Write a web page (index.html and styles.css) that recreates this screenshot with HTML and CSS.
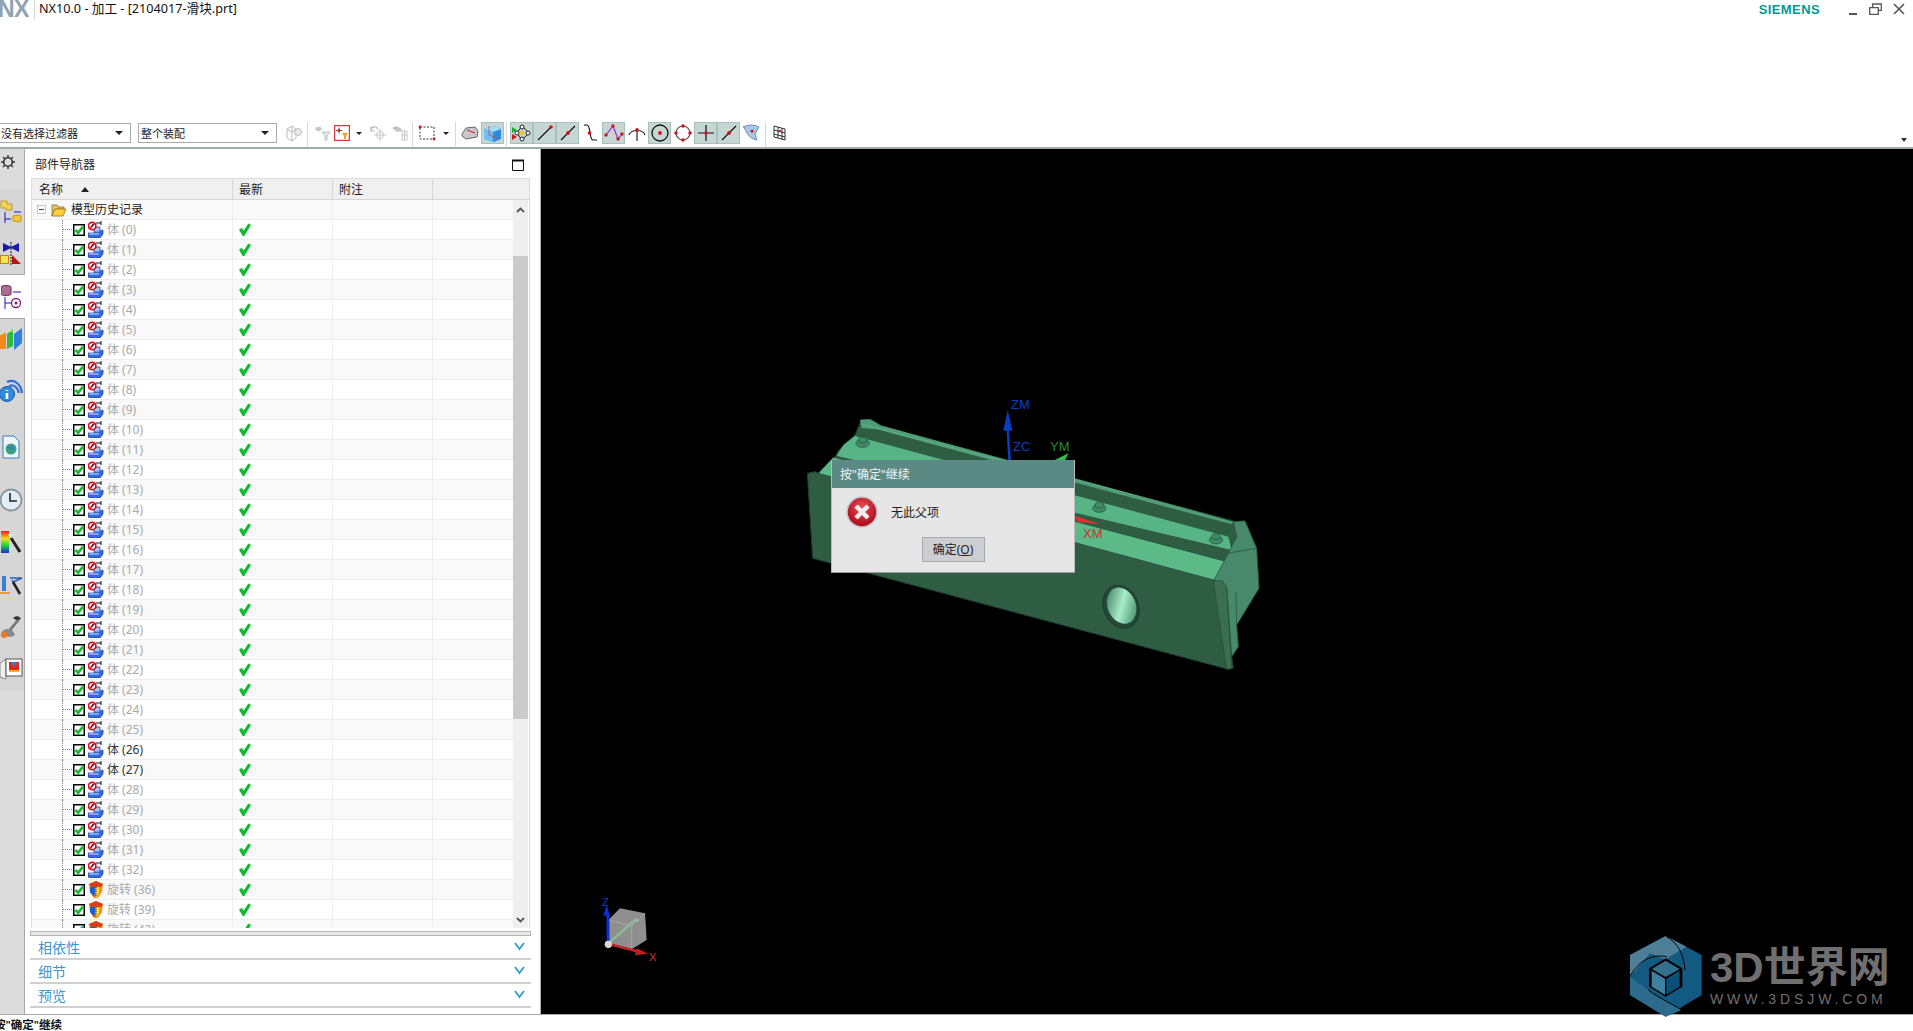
FILE: index.html
```html
<!DOCTYPE html>
<html lang="zh">
<head>
<meta charset="utf-8">
<title>NX10.0 - 加工 - [2104017-滑块.prt]</title>
<link rel="stylesheet" href="styles.css">
</head>
<body>
<svg class="defs" width="0" height="0">
  <symbol id="i-box" viewBox="0 0 12 12"><rect x=".75" y=".75" width="10.5" height="10.5" fill="#fff" stroke="#000" stroke-width="1.5"/><path d="M2.5 6l2.6 2.8L10 2.6" fill="none" stroke="#0fbe2c" stroke-width="2.6"/></symbol>
  <symbol id="i-body" viewBox="0 0 16 17"><path d="M8 2h5M13 0v4" stroke="#111" fill="none"/><path d="M6 6h6v4l3-1v4l-3 4H3l-3-1v-4h6z" fill="#3568d8" stroke="#1c3f9e" stroke-width=".7"/><path d="M6.500 6.500h5v4h-5z" fill="#a8c4ef"/><path d="M1 12h10v2H1z" fill="#7fa6ea"/><circle cx="4.200" cy="5" r="3.700" fill="#fff" stroke="#d3121e" stroke-width="1.700"/><path d="M1.800 7.500l5-5" stroke="#d3121e" stroke-width="1.500"/><path d="M3 6l2-3" stroke="#111"/></symbol>
  <symbol id="i-rev" viewBox="0 0 16 17"><path d="M1 3l7-3 7 3-1 8-4 6H6l-4-6z" fill="#f0941a"/><path d="M1 3l7-3 7 3-2 3H3z" fill="#d8401a"/><path d="M2 6h5v6l-1 4-4-5z" fill="#1d5fd0"/><path d="M8 6h3v6l-2 4H8z" fill="#ffd23a"/><path d="M8 6v10" stroke="#222" stroke-dasharray="1 1"/></symbol>
  <symbol id="i-tick" viewBox="0 0 12 13"><path d="M0 6.800l2.600-2 2.200 2.700L9.300.5 12 2 5.300 13H3.700z" fill="#10bd2e"/></symbol>
  <symbol id="i-ln" viewBox="0 0 20 20"><path d="M3 17L16 4" stroke="#111" stroke-width="1.200"/><circle cx="16" cy="4" r="1.800" fill="#d3121e"/></symbol>
  <symbol id="i-mid" viewBox="0 0 20 20"><path d="M3 17L17 3" stroke="#111" stroke-width="1.200"/><circle cx="10" cy="10" r="1.900" fill="#d3121e"/></symbol>
  <symbol id="i-chev" viewBox="0 0 11 9"><path d="M1 1l4.500 6L10 1" fill="none" stroke="#3a97cf" stroke-width="1.800"/></symbol>
</svg>

<header class="titlebar">
  <span class="nx">NX</span>
  <span class="title">NX10.0 - 加工 - [2104017-滑块.prt]</span>
  <span class="siemens">SIEMENS</span>
  <span class="winbtns">
    <svg width="10" height="12" viewBox="0 0 10 12"><path d="M1 11h8" stroke="#555" stroke-width="2"/></svg>
    <svg width="13" height="12" viewBox="0 0 13 12"><path d="M.7 4.700h8.600v6.600H.7zM3.700 4.500V1h8.600v6.400H9.500" fill="none" stroke="#555" stroke-width="1.300"/></svg>
    <svg width="12" height="12" viewBox="0 0 12 12"><path d="M1 1l10 10M11 1L1 11" stroke="#555" stroke-width="1.600"/></svg>
  </span>
</header>

<div class="toolbar">
  <div class="combo c1"><span>没有选择过滤器</span><i></i></div>
  <div class="combo c2"><span>整个装配</span><i></i></div>
  <div class="tb first"><svg width="18" height="18" viewBox="0 0 18 18" class="dis"><path d="M2 5l5-3 4 3v9l-4 3-5-3zM7 2v15M2 5l5 3 4-3" fill="none" stroke="#999"/><circle cx="13" cy="8" r="3.500" fill="#ddd" stroke="#999"/></svg></div>
  <span class="sep"></span>
  <div class="tb"><svg width="18" height="18" viewBox="0 0 18 18" class="dis"><path d="M2 5c1-3 6-3 7 0l-2 2H4z" fill="#aaa"/><path d="M9 8h8l-3 4v4h-2v-4z" fill="#ddd" stroke="#999"/></svg></div>
  <div class="tb w18"><svg width="16" height="16" viewBox="0 0 16 16"><rect x=".6" y=".6" width="14.800" height="14.800" fill="#fff" stroke="#cf3b3b" stroke-width="1.200"/><path d="M5 2.500v6M2 5.500h6" stroke="#555"/><circle cx="5" cy="5.500" r="1.300" fill="#d3121e"/><path d="M8 8h6l-2 3v3h-2v-3z" fill="#f0a020"/></svg></div>
  <div class="drop"></div>
  <div class="tb"><svg width="18" height="18" viewBox="0 0 18 18" class="dis"><path d="M2 6c0-3 5-5 7-1M2 3v4h4" fill="none" stroke="#888" stroke-width="1.200"/><circle cx="11" cy="11" r="3.500" fill="none" stroke="#aaa"/><path d="M11 5v12M5 11h12" stroke="#aaa"/></svg></div>
  <div class="tb w21"><svg width="18" height="18" viewBox="0 0 18 18" class="dis"><path d="M1 4l4-2 5 2 1 3-5 1z" fill="#aaa"/><path d="M11 7h5v9h-5zM11 11h5M13.500 7v9" fill="none" stroke="#aaa"/></svg></div>
  <span class="sep"></span>
  <div class="tb"><svg width="18" height="18" viewBox="0 0 18 18"><rect x="2" y="3" width="14" height="12" fill="none" stroke="#333" stroke-dasharray="2 1.500"/><circle cx="2" cy="3" r="1.400" fill="#d3121e"/><circle cx="16" cy="15" r="1.400" fill="#d3121e"/></svg></div>
  <div class="drop"></div>
  <span class="sep"></span>
  <div class="tb"><svg width="18" height="18" viewBox="0 0 18 18"><path d="M1 10l4-6 9-1 3 4-1 6-11 2-4-3z" fill="#c8c8cc" stroke="#666"/><path d="M6 6l8 3" stroke="#d3121e"/></svg></div>
  <div class="tb on"><svg width="19" height="19" viewBox="0 0 19 19"><path d="M1 5l10-3 7 3v10l-7 3-10-3z" fill="#2f8be0"/><path d="M1 5l10-3 7 3-8 3z" fill="#a6dcf8"/><path d="M1 5l9 3v10l-9-3z" fill="#6cc0f2"/><path d="M6 2v9l8 3" fill="none" stroke="#d0404a" stroke-width=".8"/></svg></div>
  <span class="sep r3"></span>
  <div class="tb on"><svg width="20" height="20" viewBox="0 0 20 20"><path d="M0 4l5 3-5 3z" fill="#11b02e"/><path d="M0 11l5 3-5 3z" fill="#d3121e"/><path d="M10 3l7 7-7 7-5-7z" fill="none" stroke="#222"/><circle cx="10" cy="4" r="2" fill="#fff" stroke="#222"/><circle cx="16" cy="10" r="2" fill="#fff" stroke="#222"/><circle cx="10" cy="16" r="2" fill="#fff" stroke="#222"/><circle cx="5" cy="10" r="2" fill="#fff" stroke="#222"/><circle cx="10" cy="10" r="2.200" fill="#f5c518"/></svg></div>
  <div class="tb on"><svg width="20" height="20"><use href="#i-ln"/></svg></div>
  <div class="tb on"><svg width="20" height="20"><use href="#i-mid"/></svg></div>
  <div class="tb"><svg width="20" height="20" viewBox="0 0 20 20"><path d="M3 2h3c4 0 2 15 6 15h4" fill="none" stroke="#111" stroke-width="1.200"/><circle cx="8.500" cy="10" r="1.800" fill="#d3121e"/></svg></div>
  <div class="tb on"><svg width="20" height="20" viewBox="0 0 20 20"><path d="M2 12L9 3l5 13 4-5" fill="none" stroke="#9a2bd0" stroke-width="1.200"/><circle cx="2" cy="12" r="1.700" fill="#d3121e"/><circle cx="9" cy="3" r="1.700" fill="#d3121e"/><circle cx="14" cy="16" r="1.700" fill="#d3121e"/><circle cx="18" cy="11" r="1.700" fill="#d3121e"/></svg></div>
  <div class="tb"><svg width="20" height="20" viewBox="0 0 20 20"><path d="M10 5v13M2 12c2-6 14-6 16 0" fill="none" stroke="#222" stroke-width="1.200"/><circle cx="10" cy="7" r="1.800" fill="#d3121e"/></svg></div>
  <div class="tb on"><svg width="20" height="20" viewBox="0 0 20 20"><circle cx="10" cy="10" r="8" fill="none" stroke="#111" stroke-width="1.300"/><circle cx="10" cy="10" r="1.900" fill="#d3121e"/></svg></div>
  <div class="tb"><svg width="20" height="20" viewBox="0 0 20 20"><circle cx="10" cy="10" r="7" fill="none" stroke="#555" stroke-width="1.200"/><circle cx="10" cy="3" r="1.800" fill="#d3121e"/><circle cx="3" cy="10" r="1.800" fill="#d3121e"/><circle cx="17" cy="10" r="1.800" fill="#d3121e"/><circle cx="10" cy="17" r="1.800" fill="#d3121e"/></svg></div>
  <div class="tb on"><svg width="20" height="20" viewBox="0 0 20 20"><path d="M10 2v16M2 10h16" stroke="#111" stroke-width="1.200"/><circle cx="10" cy="10" r="1.800" fill="#d3121e"/></svg></div>
  <div class="tb on"><svg width="20" height="20"><use href="#i-mid"/></svg></div>
  <div class="tb"><svg width="20" height="20" viewBox="0 0 20 20"><path d="M1 4c6-3 12-2 16 0l-4 7 2 6c-5-1-9-3-13-13z" fill="#a9c8e8" stroke="#6a8db0"/><circle cx="10" cy="8" r="1.600" fill="#d3121e"/></svg></div>
  <span class="sep"></span>
  <div class="tb"><svg width="16" height="18" viewBox="0 0 16 18"><path d="M2 2l11 3v11L2 13zM2 6l11 3M2 10l11 3M6 3v11M10 4v11" fill="none" stroke="#333"/><circle cx="8" cy="7" r="1.200" fill="#d3121e"/></svg></div>
  <svg class="more" width="6" height="4" viewBox="0 0 6 4"><path d="M0 0h6L3 4z" fill="#333"/></svg>
</div>

<main class="main">
  <nav class="rail">
    <div class="gear"><svg width="14" height="14" viewBox="0 0 14 14"><circle cx="7" cy="7" r="4.300" fill="none" stroke="#333" stroke-width="1.600"/><path d="M7 0v2.500M7 11.500V14M0 7h2.500M11.500 7H14M2 2l2 2M10 10l2 2M12 2l-2 2M4 10l-2 2" stroke="#333" stroke-width="1.400"/></svg></div>
    <div class="tab h43"><svg width="22" height="24" viewBox="0 0 22 24"><path d="M1 1h6v3h5v6H6V8H1z" fill="#f7d25a" stroke="#b88a10" stroke-width=".8"/><path d="M13 16l5-1 3 1v5l-3 1-5-1z" fill="#f5c83a" stroke="#b88a10" stroke-width=".8"/><path d="M5 12v11M5 19h6M14 12h7" stroke="#1414c8" stroke-width="1"/></svg></div>
    <div class="tab h42 ruled"><svg width="22" height="24" viewBox="0 0 22 24"><path d="M3 1l8 4 8-4v9l-8-4-8 4z" fill="#1a1ab4"/><path d="M11 0v24" stroke="#111" stroke-dasharray="2 1"/><rect x="0.500" y="13.500" width="8" height="8" fill="#f6e25a" stroke="#b88a10"/><path d="M12 13l9 9h-9z" fill="#b81414"/></svg></div>
    <div class="tab h43 active"><svg width="22" height="24" viewBox="0 0 22 24"><path d="M0 2c0-2 10-2 10 0v7c0 2-10 2-10 0z" fill="#b06a94" stroke="#6b2a58"/><path d="M12 7h8M4 12v12M4 18h6" stroke="#1414c8"/><circle cx="15" cy="18" r="4.500" fill="none" stroke="#8a1f6e" stroke-width="1.300"/><circle cx="15" cy="18" r="1.500" fill="#8a1f6e"/></svg></div>
    <div class="tab h42"><svg width="24" height="23" viewBox="0 0 24 23"><path d="M1 7l6-3v17H1z" fill="#f08a1a"/><path d="M8 6l6-5v17l-6 3z" fill="#2fbb3c"/><path d="M15 6l8-6v15l-8 7z" fill="#2d7fe0"/><path d="M1 7l6-3 2-1h5" fill="none" stroke="#e8e080"/></svg></div>
    <div class="tab h60"><svg width="24" height="26" viewBox="0 0 24 26"><path d="M8 5c8-4 14 3 15 11M10 9c5-2 9 2 10 7" fill="none" stroke="#2f6fd6" stroke-width="2.200"/><circle cx="8" cy="17" r="7.500" fill="#2d8be0" stroke="#185bb0"/><path d="M8 13v1M8 16v6" stroke="#fff" stroke-width="2.600"/></svg></div>
    <div class="tab h54"><svg width="20" height="24" viewBox="0 0 20 24"><path d="M2 1h11l5 5v17H2z" fill="#eef5fc" stroke="#3a7fc0"/><circle cx="10" cy="14" r="5.500" fill="#3f9f78"/><path d="M6 13c2-3 6-3 7 0-1 3-4 3-4 0z" fill="#2d7fd0"/></svg></div>
    <div class="tab h47 dn"><svg width="24" height="24" viewBox="0 0 24 24"><circle cx="12" cy="12" r="10.500" fill="#e4edf4" stroke="#8a96a0" stroke-width="1.800"/><path d="M11 5v8h7" fill="none" stroke="#222" stroke-width="1.600"/></svg></div>
    <div class="tab h42"><svg width="22" height="24" viewBox="0 0 22 24"><defs><linearGradient id="rb" x1="0" y1="0" x2="0" y2="1"><stop offset="0" stop-color="#f01818"/><stop offset=".35" stop-color="#f0e018"/><stop offset=".65" stop-color="#18d838"/><stop offset="1" stop-color="#1828e0"/></linearGradient></defs><path d="M1 1h8v22H1z" fill="url(#rb)"/><path d="M11 8l9 14" stroke="#222" stroke-width="3"/><path d="M11 2v6M8 5h6" stroke="#e8e8e8"/></svg></div>
    <div class="tab h43"><svg width="24" height="22" viewBox="0 0 24 22"><path d="M3 2h4v15H3z" fill="#3a7fd6"/><path d="M1 19h10" stroke="#e8a020" stroke-width="2"/><path d="M11 4h12l-9 4M13 6l8 14" fill="none" stroke="#2a5fb0" stroke-width="1.500"/><path d="M14 8l7 12" stroke="#222" stroke-width="2.500"/></svg></div>
    <div class="tab h41"><svg width="22" height="24" viewBox="0 0 22 24"><path d="M9 14l9-11 2 2-9 11z" fill="#777"/><path d="M13 3c3-3 7-2 8 1l-5 1z" fill="#333"/><path d="M1 18c3-5 8-5 12-2l2 4c-4 3-10 2-14-2z" fill="#888"/><circle cx="4" cy="20" r="3" fill="#f07818"/></svg></div>
    <div class="tab h43"><svg width="24" height="24" viewBox="0 0 24 24"><path d="M1 6l6-4v20l-6-2z" fill="#eee" stroke="#888"/><rect x="7" y="2" width="16" height="17" fill="#fff" stroke="#555"/><rect x="10" y="5" width="10" height="8" fill="#e02818"/><path d="M12 5h6l-3 5z" fill="#2d7fe0"/><path d="M10 13h10v2H10z" fill="#f0b020"/></svg></div>
  </nav>

  <section class="panel">
    <div class="panel-head">
      <span>部件导航器</span>
      <svg width="12" height="12" viewBox="0 0 12 12"><path d="M.5 1.500h11v10H.5z" fill="none" stroke="#111"/><path d="M0 1.500h12" stroke="#111" stroke-width="2"/></svg>
    </div>
    <div class="table">
      <div class="thead">
        <div class="th name">名称<i class="sort"></i></div>
        <div class="th col">最新</div>
        <div class="th col">附注</div>
        <div class="th rest"></div>
      </div>
      <div class="tbody">
        <div class="rows">
          <div class="row">
            <div class="cell name root"><span class="plus"></span><svg class="folder" width="16" height="14" viewBox="0 0 16 14"><path d="M1 13V2h5l1 2h6v2H4z" fill="#e8c770" stroke="#8a6a20" stroke-width=".8"/><path d="M1 13l3-7h11l-3 7z" fill="#ffcf3a" stroke="#9a7010" stroke-width=".8"/></svg><span>模型历史记录</span></div>
            <div class="cell col"></div><div class="cell col"></div><div class="cell rest"></div>
          </div>
          <div class="row"><div class="cell name"><span class="branch"></span><svg class="box"><use href="#i-box"/></svg><svg class="ic"><use href="#i-body"/></svg><span class="lbl">体 (0)</span></div><div class="cell col"><svg class="tick"><use href="#i-tick"/></svg></div><div class="cell col"></div><div class="cell rest"></div></div>
          <div class="row"><div class="cell name"><span class="branch"></span><svg class="box"><use href="#i-box"/></svg><svg class="ic"><use href="#i-body"/></svg><span class="lbl">体 (1)</span></div><div class="cell col"><svg class="tick"><use href="#i-tick"/></svg></div><div class="cell col"></div><div class="cell rest"></div></div>
          <div class="row"><div class="cell name"><span class="branch"></span><svg class="box"><use href="#i-box"/></svg><svg class="ic"><use href="#i-body"/></svg><span class="lbl">体 (2)</span></div><div class="cell col"><svg class="tick"><use href="#i-tick"/></svg></div><div class="cell col"></div><div class="cell rest"></div></div>
          <div class="row"><div class="cell name"><span class="branch"></span><svg class="box"><use href="#i-box"/></svg><svg class="ic"><use href="#i-body"/></svg><span class="lbl">体 (3)</span></div><div class="cell col"><svg class="tick"><use href="#i-tick"/></svg></div><div class="cell col"></div><div class="cell rest"></div></div>
          <div class="row"><div class="cell name"><span class="branch"></span><svg class="box"><use href="#i-box"/></svg><svg class="ic"><use href="#i-body"/></svg><span class="lbl">体 (4)</span></div><div class="cell col"><svg class="tick"><use href="#i-tick"/></svg></div><div class="cell col"></div><div class="cell rest"></div></div>
          <div class="row"><div class="cell name"><span class="branch"></span><svg class="box"><use href="#i-box"/></svg><svg class="ic"><use href="#i-body"/></svg><span class="lbl">体 (5)</span></div><div class="cell col"><svg class="tick"><use href="#i-tick"/></svg></div><div class="cell col"></div><div class="cell rest"></div></div>
          <div class="row"><div class="cell name"><span class="branch"></span><svg class="box"><use href="#i-box"/></svg><svg class="ic"><use href="#i-body"/></svg><span class="lbl">体 (6)</span></div><div class="cell col"><svg class="tick"><use href="#i-tick"/></svg></div><div class="cell col"></div><div class="cell rest"></div></div>
          <div class="row"><div class="cell name"><span class="branch"></span><svg class="box"><use href="#i-box"/></svg><svg class="ic"><use href="#i-body"/></svg><span class="lbl">体 (7)</span></div><div class="cell col"><svg class="tick"><use href="#i-tick"/></svg></div><div class="cell col"></div><div class="cell rest"></div></div>
          <div class="row"><div class="cell name"><span class="branch"></span><svg class="box"><use href="#i-box"/></svg><svg class="ic"><use href="#i-body"/></svg><span class="lbl">体 (8)</span></div><div class="cell col"><svg class="tick"><use href="#i-tick"/></svg></div><div class="cell col"></div><div class="cell rest"></div></div>
          <div class="row"><div class="cell name"><span class="branch"></span><svg class="box"><use href="#i-box"/></svg><svg class="ic"><use href="#i-body"/></svg><span class="lbl">体 (9)</span></div><div class="cell col"><svg class="tick"><use href="#i-tick"/></svg></div><div class="cell col"></div><div class="cell rest"></div></div>
          <div class="row"><div class="cell name"><span class="branch"></span><svg class="box"><use href="#i-box"/></svg><svg class="ic"><use href="#i-body"/></svg><span class="lbl">体 (10)</span></div><div class="cell col"><svg class="tick"><use href="#i-tick"/></svg></div><div class="cell col"></div><div class="cell rest"></div></div>
          <div class="row"><div class="cell name"><span class="branch"></span><svg class="box"><use href="#i-box"/></svg><svg class="ic"><use href="#i-body"/></svg><span class="lbl">体 (11)</span></div><div class="cell col"><svg class="tick"><use href="#i-tick"/></svg></div><div class="cell col"></div><div class="cell rest"></div></div>
          <div class="row"><div class="cell name"><span class="branch"></span><svg class="box"><use href="#i-box"/></svg><svg class="ic"><use href="#i-body"/></svg><span class="lbl">体 (12)</span></div><div class="cell col"><svg class="tick"><use href="#i-tick"/></svg></div><div class="cell col"></div><div class="cell rest"></div></div>
          <div class="row"><div class="cell name"><span class="branch"></span><svg class="box"><use href="#i-box"/></svg><svg class="ic"><use href="#i-body"/></svg><span class="lbl">体 (13)</span></div><div class="cell col"><svg class="tick"><use href="#i-tick"/></svg></div><div class="cell col"></div><div class="cell rest"></div></div>
          <div class="row"><div class="cell name"><span class="branch"></span><svg class="box"><use href="#i-box"/></svg><svg class="ic"><use href="#i-body"/></svg><span class="lbl">体 (14)</span></div><div class="cell col"><svg class="tick"><use href="#i-tick"/></svg></div><div class="cell col"></div><div class="cell rest"></div></div>
          <div class="row"><div class="cell name"><span class="branch"></span><svg class="box"><use href="#i-box"/></svg><svg class="ic"><use href="#i-body"/></svg><span class="lbl">体 (15)</span></div><div class="cell col"><svg class="tick"><use href="#i-tick"/></svg></div><div class="cell col"></div><div class="cell rest"></div></div>
          <div class="row"><div class="cell name"><span class="branch"></span><svg class="box"><use href="#i-box"/></svg><svg class="ic"><use href="#i-body"/></svg><span class="lbl">体 (16)</span></div><div class="cell col"><svg class="tick"><use href="#i-tick"/></svg></div><div class="cell col"></div><div class="cell rest"></div></div>
          <div class="row"><div class="cell name"><span class="branch"></span><svg class="box"><use href="#i-box"/></svg><svg class="ic"><use href="#i-body"/></svg><span class="lbl">体 (17)</span></div><div class="cell col"><svg class="tick"><use href="#i-tick"/></svg></div><div class="cell col"></div><div class="cell rest"></div></div>
          <div class="row"><div class="cell name"><span class="branch"></span><svg class="box"><use href="#i-box"/></svg><svg class="ic"><use href="#i-body"/></svg><span class="lbl">体 (18)</span></div><div class="cell col"><svg class="tick"><use href="#i-tick"/></svg></div><div class="cell col"></div><div class="cell rest"></div></div>
          <div class="row"><div class="cell name"><span class="branch"></span><svg class="box"><use href="#i-box"/></svg><svg class="ic"><use href="#i-body"/></svg><span class="lbl">体 (19)</span></div><div class="cell col"><svg class="tick"><use href="#i-tick"/></svg></div><div class="cell col"></div><div class="cell rest"></div></div>
          <div class="row"><div class="cell name"><span class="branch"></span><svg class="box"><use href="#i-box"/></svg><svg class="ic"><use href="#i-body"/></svg><span class="lbl">体 (20)</span></div><div class="cell col"><svg class="tick"><use href="#i-tick"/></svg></div><div class="cell col"></div><div class="cell rest"></div></div>
          <div class="row"><div class="cell name"><span class="branch"></span><svg class="box"><use href="#i-box"/></svg><svg class="ic"><use href="#i-body"/></svg><span class="lbl">体 (21)</span></div><div class="cell col"><svg class="tick"><use href="#i-tick"/></svg></div><div class="cell col"></div><div class="cell rest"></div></div>
          <div class="row"><div class="cell name"><span class="branch"></span><svg class="box"><use href="#i-box"/></svg><svg class="ic"><use href="#i-body"/></svg><span class="lbl">体 (22)</span></div><div class="cell col"><svg class="tick"><use href="#i-tick"/></svg></div><div class="cell col"></div><div class="cell rest"></div></div>
          <div class="row"><div class="cell name"><span class="branch"></span><svg class="box"><use href="#i-box"/></svg><svg class="ic"><use href="#i-body"/></svg><span class="lbl">体 (23)</span></div><div class="cell col"><svg class="tick"><use href="#i-tick"/></svg></div><div class="cell col"></div><div class="cell rest"></div></div>
          <div class="row"><div class="cell name"><span class="branch"></span><svg class="box"><use href="#i-box"/></svg><svg class="ic"><use href="#i-body"/></svg><span class="lbl">体 (24)</span></div><div class="cell col"><svg class="tick"><use href="#i-tick"/></svg></div><div class="cell col"></div><div class="cell rest"></div></div>
          <div class="row"><div class="cell name"><span class="branch"></span><svg class="box"><use href="#i-box"/></svg><svg class="ic"><use href="#i-body"/></svg><span class="lbl">体 (25)</span></div><div class="cell col"><svg class="tick"><use href="#i-tick"/></svg></div><div class="cell col"></div><div class="cell rest"></div></div>
          <div class="row"><div class="cell name"><span class="branch"></span><svg class="box"><use href="#i-box"/></svg><svg class="ic"><use href="#i-body"/></svg><span class="lbl dark">体 (26)</span></div><div class="cell col"><svg class="tick"><use href="#i-tick"/></svg></div><div class="cell col"></div><div class="cell rest"></div></div>
          <div class="row"><div class="cell name"><span class="branch"></span><svg class="box"><use href="#i-box"/></svg><svg class="ic"><use href="#i-body"/></svg><span class="lbl dark">体 (27)</span></div><div class="cell col"><svg class="tick"><use href="#i-tick"/></svg></div><div class="cell col"></div><div class="cell rest"></div></div>
          <div class="row"><div class="cell name"><span class="branch"></span><svg class="box"><use href="#i-box"/></svg><svg class="ic"><use href="#i-body"/></svg><span class="lbl">体 (28)</span></div><div class="cell col"><svg class="tick"><use href="#i-tick"/></svg></div><div class="cell col"></div><div class="cell rest"></div></div>
          <div class="row"><div class="cell name"><span class="branch"></span><svg class="box"><use href="#i-box"/></svg><svg class="ic"><use href="#i-body"/></svg><span class="lbl">体 (29)</span></div><div class="cell col"><svg class="tick"><use href="#i-tick"/></svg></div><div class="cell col"></div><div class="cell rest"></div></div>
          <div class="row"><div class="cell name"><span class="branch"></span><svg class="box"><use href="#i-box"/></svg><svg class="ic"><use href="#i-body"/></svg><span class="lbl">体 (30)</span></div><div class="cell col"><svg class="tick"><use href="#i-tick"/></svg></div><div class="cell col"></div><div class="cell rest"></div></div>
          <div class="row"><div class="cell name"><span class="branch"></span><svg class="box"><use href="#i-box"/></svg><svg class="ic"><use href="#i-body"/></svg><span class="lbl">体 (31)</span></div><div class="cell col"><svg class="tick"><use href="#i-tick"/></svg></div><div class="cell col"></div><div class="cell rest"></div></div>
          <div class="row"><div class="cell name"><span class="branch"></span><svg class="box"><use href="#i-box"/></svg><svg class="ic"><use href="#i-body"/></svg><span class="lbl">体 (32)</span></div><div class="cell col"><svg class="tick"><use href="#i-tick"/></svg></div><div class="cell col"></div><div class="cell rest"></div></div>
          <div class="row"><div class="cell name"><span class="branch"></span><svg class="box"><use href="#i-box"/></svg><svg class="ic"><use href="#i-rev"/></svg><span class="lbl">旋转 (36)</span></div><div class="cell col"><svg class="tick"><use href="#i-tick"/></svg></div><div class="cell col"></div><div class="cell rest"></div></div>
          <div class="row"><div class="cell name"><span class="branch"></span><svg class="box"><use href="#i-box"/></svg><svg class="ic"><use href="#i-rev"/></svg><span class="lbl">旋转 (39)</span></div><div class="cell col"><svg class="tick"><use href="#i-tick"/></svg></div><div class="cell col"></div><div class="cell rest"></div></div>
          <div class="row"><div class="cell name"><span class="branch"></span><svg class="box"><use href="#i-box"/></svg><svg class="ic"><use href="#i-rev"/></svg><span class="lbl">旋转 (42)</span></div><div class="cell col"><svg class="tick"><use href="#i-tick"/></svg></div><div class="cell col"></div><div class="cell rest"></div></div>
        </div>
        <div class="scrollbar">
          <svg width="9" height="6" viewBox="0 0 9 6"><path d="M1 5l3.500-3.500L8 5" fill="none" stroke="#555" stroke-width="1.800"/></svg>
          <div class="thumb"></div>
          <svg width="9" height="6" viewBox="0 0 9 6"><path d="M1 1l3.500 3.500L8 1" fill="none" stroke="#555" stroke-width="1.800"/></svg>
        </div>
      </div>
    </div>
    <div class="splitter"></div>
    <div class="sect"><span>相依性</span><svg width="11" height="9"><use href="#i-chev"/></svg></div>
    <div class="sect"><span>细节</span><svg width="11" height="9"><use href="#i-chev"/></svg></div>
    <div class="sect"><span>预览</span><svg width="11" height="9"><use href="#i-chev"/></svg></div>
  </section>

  <section class="viewport">
    <svg class="model" viewBox="541 149 1372 865" width="1372" height="865">
      <defs>
        <linearGradient id="boss" x1="0" y1="0" x2="1" y2="1"><stop offset="0" stop-color="#2f6d50"/><stop offset=".5" stop-color="#a8ecc8"/><stop offset="1" stop-color="#2f7a58"/></linearGradient>
      </defs>
      <g transform="translate(780 380) scale(.33333)" stroke-linejoin="round">
        <path d="M225 165L245 118l30 2 30 18L1360 425l35-2 35 82 7 120-67 110 5 65-20 30 5 35-15 3L98 535 82 280l25-5 8 5 50-48 10-20z" fill="#2f5d44" stroke="#1f3f2e" stroke-width="3"/>
        <path d="M240 120l30-2 30 18L1360 425l-6 8L290 148l-45-3z" fill="#4d9d75"/>
        <path d="M245 145L1354 433l2 65L225 168z" fill="#2f5d44"/>
        <path d="M190 195L225 168 1345 470l10 40L170 228z" fill="#57b585"/>
        <path d="M170 228L1345 510l9 38L160 232z" fill="#2f5d44"/>
        <path d="M115 280L160 232 1352 548l-50 52z" fill="#5bba88" stroke="#234a36" stroke-width="2"/>
        <path d="M1302 600L1345 520l25-50-10-45 35-2 35 82 7 120-67 110 5 65-20 30-15-210z" fill="#47896a" stroke="#234a36" stroke-width="2"/>
        <path d="M1300 605l25-5 15 20 15 245-15 3z" fill="#3a6f54" stroke="#234a36" stroke-width="2"/>
        <path d="M1340 520l90-15M1370 735l-2-100" stroke="#234a36" stroke-width="2" fill="none"/>
        <path d="M245 132L1360 422" stroke="#8fcfae" stroke-width="2" stroke-dasharray="3 2" fill="none" opacity=".7"/>
        <g fill="#3f8b68" stroke="#234a36" stroke-width="2">
          <ellipse cx="248" cy="190" rx="20" ry="12"/><ellipse cx="248" cy="180" rx="13" ry="9"/>
          <ellipse cx="958" cy="385" rx="20" ry="12"/><ellipse cx="958" cy="375" rx="13" ry="9"/>
          <ellipse cx="1308" cy="480" rx="20" ry="12"/><ellipse cx="1308" cy="470" rx="13" ry="9"/>
        </g>
        <ellipse cx="1023" cy="680" rx="52" ry="66" transform="rotate(-22 1023 680)" fill="#24483a" stroke="#1b3a2a" stroke-width="3"/>
        <ellipse cx="1025" cy="677" rx="42" ry="56" transform="rotate(-22 1025 677)" fill="url(#boss)"/>
        <path d="M683 90l14 62h-10l6 90h-8l-5-90h-10z" fill="#0a3ec0"/>
        <path d="M865 220l-45 22 35 0z" fill="#2fc048"/>
        <path d="M885 408l77 24-70-6z" fill="#e03030"/>
      </g>
      <text class="ax blue" x="1011" y="409">ZM</text>
      <text class="ax blue" x="1013" y="451">ZC</text>
      <text class="ax green" x="1050" y="451">YM</text>
      <text class="ax red" x="1083" y="538">XM</text>
      <g transform="translate(580 880) scale(.33333)">
        <path d="M85 120l35-35 75 15 5 80-45 28-70-18z" fill="#8f8f8f"/>
        <path d="M85 120l70 18 40-38M155 138v70" stroke="#a8a8a8" stroke-width="3" fill="none"/>
        <path d="M85 190l80-70" stroke="#8fb896" stroke-width="7"/>
        <path d="M165 118l10 6" stroke="#a8c8ae" stroke-width="5"/>
        <path d="M85 192l95 24" stroke="#c02020" stroke-width="7"/>
        <path d="M170 205l35 16-40 5z" fill="#c02020"/>
        <path d="M84 190V100" stroke="#0b2fd0" stroke-width="9"/>
        <path d="M80 75l10 32H70z" fill="#0b2fd0"/>
        <circle cx="85" cy="193" r="11" fill="#d8d8d8"/>
      </g>
      <text class="ax blue small" x="602" y="906">Z</text>
      <text class="ax red small" x="649" y="961">X</text>
    </svg>

    <div class="dialog">
      <div class="dlg-title">按"确定"继续</div>
      <div class="dlg-body">
        <svg width="32" height="32" viewBox="0 0 32 32"><defs><radialGradient id="err" cx=".5" cy=".35" r=".7"><stop offset="0" stop-color="#e8505a"/><stop offset="1" stop-color="#a30010"/></radialGradient></defs><circle cx="16" cy="16" r="15" fill="url(#err)" stroke="#c8c8c8" stroke-width="1.600"/><path d="M10 10l12 12M22 10L10 22" stroke="#f0f0f0" stroke-width="4.400"/></svg>
        <span>无此父项</span>
      </div>
      <div class="dlg-foot"><button class="dlg-btn" type="button">确定(<u>O</u>)</button></div>
    </div>

    <div class="watermark">
      <svg width="72" height="82" viewBox="90 48 216 246">
        <path d="M197 48L305 105v120L197 290 90 225V105z" fill="#135a82"/>
        <path d="M197 48L260 80 195 118 150 100 90 170V105z" fill="#4f7f98"/>
        <path d="M90 170l55 40 100 60-48 20-107-65z" fill="#2d6a8c"/>
        <path d="M197 48C235 70 250 100 255 150M90 170c20-40 60-70 110-60M145 210c40 30 70 40 100 60" stroke="#000" stroke-width="3" fill="none"/>
        <path d="M197 115l50 30v55l-50 30-50-30v-55z" fill="#000"/>
        <path d="M197 122l42 25-42 24-42-24z" fill="#356f8f"/>
        <path d="M155 152l40 24v48l-40-24z" fill="#3f7f9f"/>
        <path d="M239 152l-40 24v48l40-24z" fill="#0c4f78"/>
      </svg>
      <div class="wm-text">
        <div class="wm-big">3D世界网</div>
        <div class="wm-small">WWW.3DSJW.COM</div>
      </div>
    </div>
  </section>
</main>

<footer class="status">按"确定"继续</footer>
</body>
</html>
```
FILE: styles.css
```css
* { box-sizing: border-box; }
html, body { margin: 0; padding: 0; }
body {
  width: 1913px;
  height: 1031px;
  overflow: hidden;
  display: flex;
  flex-direction: column;
  background: #fff;
  color: #222;
  font: 12px/1 "Noto Sans", "Noto Sans CJK SC", sans-serif;
}
.defs { position: absolute; }

/* title bar */
.titlebar {
  height: 123px;
  flex: none;
  display: flex;
  align-items: flex-start;
}
.nx {
  width: 35px;
  height: 19px;
  border-right: 1px solid #d8d8d8;
  font: bold 23px/18px "Liberation Sans", sans-serif;
  color: #8fa3b5;
  letter-spacing: -.5px;
  text-indent: -2px;
  overflow: hidden;
}
.title { margin: 0 0 0 4px; font-size: 12.65px; line-height: 16px; color: #111; }
.siemens {
  margin: 3px 0 0 auto;
  font: bold 13px/14px "Liberation Sans", sans-serif;
  color: #009a9a;
  letter-spacing: .4px;
}
.winbtns { display: flex; gap: 11px; margin: 3px 8px 0 28px; align-items: flex-start; }

/* toolbar */
.toolbar {
  height: 26px;
  flex: none;
  display: flex;
  align-items: flex-start;
  border-bottom: 2px solid #a3a9ab;
  position: relative;
}
.combo {
  height: 20px;
  border: 1px solid #aaa;
  display: flex;
  align-items: center;
  justify-content: space-between;
  padding: 0 7px 0 1px;
  font-size: 11px;
  color: #222;
}
.combo i, .drop::after {
  display: block;
  width: 0; height: 0;
  border: 4px solid transparent;
  border-top: 4px solid #222;
  border-bottom: 0;
}
.c1 { width: 131px; margin-right: 7px; border-left: 0; }
.c2 { width: 139px; padding-left: 2px; }
.tb { width: 23px; height: 22px; flex: none; display: flex; align-items: center; justify-content: center; margin-top: -1px; }
.tb.first { margin-left: 5px; }
.tb.w18 { width: 18px; }
.tb.w21 { width: 21px; }
.tb.on { background: #c6d7d3; border: 1px solid #a6c1ba; }
.tb svg { flex: none; }
.dis { opacity: .65; }
.drop { width: 15px; height: 20px; flex: none; display: flex; align-items: center; justify-content: center; }
.drop::after { content: ""; border-width: 3px; border-top-width: 3px; border-bottom: 0; }
.sep { width: 1px; height: 24px; margin: -1px 2px 0; background: #d9d9d9; flex: none; }
.sep.r3 { margin-right: 3px; }
.more { margin: 15px 6px 0 auto; }

/* main */
.main { height: 865px; flex: none; display: flex; }
.rail {
  width: 25px;
  flex: none;
  background: #dcdcdc;
  border-right: 1px solid #a9a9a9;
  display: flex;
  flex-direction: column;
}
.gear { height: 41px; padding: 6px 0 0 1px; flex: none; }
.gear svg { display: block; }
.tab { flex: none; display: flex; align-items: center; justify-content: center; overflow: hidden; background: #d6d6d6; }
.tab svg { display: block; flex: none; margin-left: -2px; }
.h41 { height: 41px; } .h42 { height: 42px; } .h43 { height: 43px; } .h47 { height: 47px; } .h54 { height: 54px; } .h60 { height: 60px; }
.dn { padding-top: 4px; }
.ruled { border-bottom: 1px solid #a9a9a9; }
.active { background: #fff; margin-right: -1px; position: relative; }
.active + .tab { border-top: 1px solid #a9a9a9; }

.panel {
  width: 516px;
  flex: none;
  display: flex;
  flex-direction: column;
  padding: 0 10px 0 6px;
  position: relative;
  background: #fff;
}
.panel-head {
  height: 29px;
  flex: none;
  display: flex;
  align-items: center;
  justify-content: space-between;
  padding: 2px 7px 0 4px;
  color: #222;
}
.table {
  width: 499px;
  height: 750px;
  flex: none;
  border: 1px solid #dcdcdc;
  border-bottom: 0;
  overflow: hidden;
}
.thead { display: flex; height: 21px; background: #f0f0f0; border-bottom: 1px solid #d6d6d6; }
.th { display: flex; align-items: center; padding: 1px 0 0 7px; border-right: 1px solid #d6d6d6; color: #222; }
.th.name, .cell.name { width: 201px; flex: none; }
.th.col, .cell.col { width: 100px; flex: none; }
.th.rest { flex: 1; border-right: 0; }
.th.col { padding-left: 6px; }
.sort { margin-left: 18px; width: 0; height: 0; border: 4.5px solid transparent; border-bottom: 5px solid #222; border-top: 0; }
.tbody { display: flex; height: 728px; }
.rows { width: 481px; flex: none; overflow: hidden; }
.row { display: flex; height: 20px; border-bottom: 1px solid #eee; }
.row:nth-child(odd) { background: #f9f9f9; }
.cell { height: 19px; display: flex; align-items: center; border-right: 1px solid #eee; }
.cell.rest { flex: 1; border-right: 0; }
.cell.col { padding-left: 6px; }
.root { padding-left: 5px; color: #222; }
.plus {
  width: 9px; height: 9px; flex: none;
  border: 1px solid #c8c8c8;
  background: linear-gradient(#444, #444) center / 5px 1px no-repeat;
  margin-right: 5px;
}
.folder { flex: none; margin-right: 4px; }
.branch {
  width: 10px;
  height: 20px;
  margin-left: 30px;
  flex: none;
  border-left: 1px dotted #888;
  background: repeating-linear-gradient(90deg, #888 0 1px, transparent 1px 2px) 0 50% / 100% 1px no-repeat;
}
.box { width: 12px; height: 12px; flex: none; margin-left: 1px; }
.ic { width: 16px; height: 17px; flex: none; margin: 0 3px 0 3px; }
.lbl { color: #a9a9a9; }
.lbl.dark { color: #333; }
.tick { width: 12px; height: 13px; }
.scrollbar {
  flex: 1;
  background: #efefef;
  display: flex;
  flex-direction: column;
  align-items: center;
  padding-top: 7px;
  height: 728px;
  margin-right: 1px;
}
.thumb { width: 15px; height: 463px; background: #cbcbcb; margin: 43px 0 198px; flex: none; }
.scrollbar svg { flex: none; }
.splitter { height: 5px; width: 501px; margin: 3px 0 0 -1px; flex: none; background: #e8e8e8; border: 1px solid #b5b5b5; }
.sect {
  height: 24px;
  flex: none;
  width: 501px;
  margin-left: -1px;
  display: flex;
  align-items: center;
  justify-content: space-between;
  border-bottom: 2px solid #d0d0d0;
  padding: 0 6px 1px 8px;
  color: #3a97cf;
  font-size: 14px;
}
.sect span { padding-top: 3px; }

/* viewport */
.viewport { flex: 1; background: #000; position: relative; border-left: 1px solid #a9b0b3; margin-left: -1px; }
.model { position: absolute; left: 0; top: 0; display: block; }
.ax { font: 13px "Liberation Sans", sans-serif; }
.ax.small { font-size: 11px; }
.blue { fill: #0a3ec0; }
.green { fill: #2a8a2a; }
.red { fill: #d03030; }

.dialog {
  position: absolute;
  left: 290px;
  top: 311px;
  width: 244px;
  height: 113px;
  background: #e6e6e6;
  border-bottom: 1px solid #9a9a9a;
  border-right: 1px solid #bbb;
  border-left: 1px solid #bbb;
}
.dlg-title { height: 28px; background: #5b8a84; color: #f4f4f4; display: flex; align-items: center; padding: 2px 0 0 8px; }
.dlg-body { display: flex; align-items: center; height: 48px; padding-left: 14px; gap: 13px; color: #222; }
.dlg-body span { padding-top: 2px; }
.dlg-body svg { flex: none; }
.dlg-foot { display: flex; justify-content: center; }
.dlg-btn { width: 63px; height: 25px; background: #cdced2; border: 1px solid #a9a9a9; padding: 0; font: inherit; color: #222; margin-top: 1px; }

.watermark { position: absolute; left: 1089px; top: 787px; display: flex; gap: 8px; }
.wm-text { padding-top: 10px; color: #6f6f6f; }
.wm-big { font: bold 42px/44px "Liberation Sans", "Noto Sans CJK SC", sans-serif; white-space: nowrap; }
.wm-small { font: 14px/16px "Liberation Sans", sans-serif; letter-spacing: 3.9px; margin-top: 1px; white-space: nowrap; }

.status {
  flex: 1;
  border-top: 1px solid #a8a8a8;
  font-weight: 600;
  font-size: 11.5px;
  line-height: 19px;
  text-indent: -6px;
  overflow: hidden;
  color: #111;
}
```
